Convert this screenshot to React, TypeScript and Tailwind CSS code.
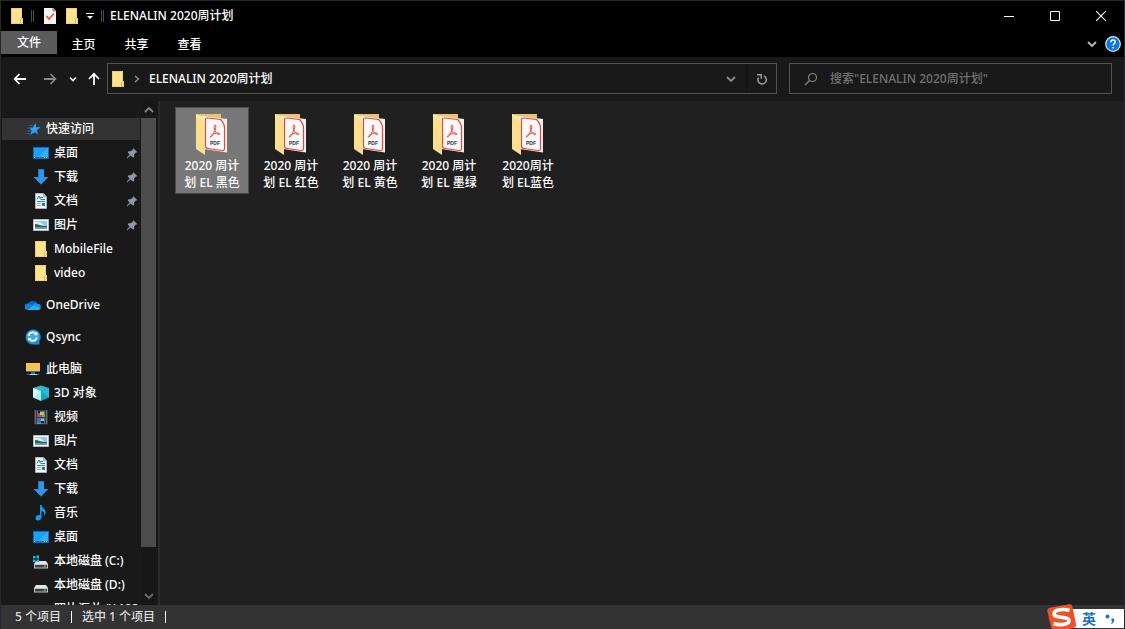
import React, { useState } from 'react';
import clsx from 'clsx';

type IconName =
  | 'desktop'
  | 'download'
  | 'document'
  | 'picture'
  | 'folder'
  | 'cloud'
  | 'sync'
  | 'pc'
  | 'cube'
  | 'video'
  | 'music'
  | 'systemDrive'
  | 'drive'
  | 'star';

interface NavItem {
  id: string;
  label: string;
  icon: IconName;
  pinned?: boolean;
}

interface NavGroup {
  root: NavItem;
  children: NavItem[];
}

const navGroups: NavGroup[] = [
  {
    root: { id: 'quick', label: '快速访问', icon: 'star' },
    children: [
      { id: 'q-desktop', label: '桌面', icon: 'desktop', pinned: true },
      { id: 'q-download', label: '下载', icon: 'download', pinned: true },
      { id: 'q-document', label: '文档', icon: 'document', pinned: true },
      { id: 'q-picture', label: '图片', icon: 'picture', pinned: true },
      { id: 'q-mobile', label: 'MobileFile', icon: 'folder' },
      { id: 'q-video', label: 'video', icon: 'folder' },
    ],
  },
  { root: { id: 'onedrive', label: 'OneDrive', icon: 'cloud' }, children: [] },
  { root: { id: 'qsync', label: 'Qsync', icon: 'sync' }, children: [] },
  {
    root: { id: 'pc', label: '此电脑', icon: 'pc' },
    children: [
      { id: 'p-3d', label: '3D 对象', icon: 'cube' },
      { id: 'p-video', label: '视频', icon: 'video' },
      { id: 'p-picture', label: '图片', icon: 'picture' },
      { id: 'p-document', label: '文档', icon: 'document' },
      { id: 'p-download', label: '下载', icon: 'download' },
      { id: 'p-music', label: '音乐', icon: 'music' },
      { id: 'p-desktop', label: '桌面', icon: 'desktop' },
      { id: 'p-c', label: '本地磁盘 (C:)', icon: 'systemDrive' },
      { id: 'p-d', label: '本地磁盘 (D:)', icon: 'drive' },
      { id: 'p-net', label: '照片汇总 (\\\\192.168', icon: 'drive' },
    ],
  },
];

const files = [
  { id: 'black', lines: ['2020 周计', '划 EL 黑色'] },
  { id: 'red', lines: ['2020 周计', '划 EL 红色'] },
  { id: 'yellow', lines: ['2020 周计', '划 EL 黄色'] },
  { id: 'green', lines: ['2020 周计', '划 EL 墨绿'] },
  { id: 'blue', lines: ['2020周计', '划 EL蓝色'] },
];

function FolderIcon() {
  return (
    <svg viewBox="0 0 16 16" className="h-4 w-4 shrink-0">
      <path d="M2 0h11v10h1v6H2z" fill="#ffe391" />
      <path d="M2.500 .5h10v10h1v5h-11z" fill="none" stroke="#f3d06a" />
      <path d="M11.500 15.500v-4l1-1" fill="none" stroke="#d9a928" strokeWidth=".8" />
    </svg>
  );
}

function Drive({ system }: { system?: boolean }) {
  return (
    <svg viewBox="0 0 16 16" className="h-4 w-4 shrink-0">
      <path d="M3 8h10l2 3H1z" fill="#e3e5e6" />
      <path d="M1 11h14v4.500H1z" fill="#c2c5c7" />
      <path d="M2 12h12v2.500H2z" fill="#3b3d3e" />
      <path d="M11 12.500h1.500v1.500H11z" fill="#45e05a" />
      {system && <path d="M0 3h2.500v2.500H0zM3.500 2.500H6v3H3.500zM0 6.500h2.500V9H0zM3.500 6.500H6V9H3.500z" fill="#18b6f0" />}
    </svg>
  );
}

function NavIcon({ name }: { name: IconName }) {
  const cls = 'h-4 w-4 shrink-0';
  switch (name) {
    case 'folder':
      return <FolderIcon />;
    case 'drive':
      return <Drive />;
    case 'systemDrive':
      return <Drive system />;
    case 'star':
      return (
        <svg viewBox="0 0 16 16" className={cls}>
          <path d="M10.500 2l.7 4.200 4.300.1-3.700 2.900 1.200 4.300-3.500-2.200L5.300 14l1.300-4.500L4 6.800l4-.4z" fill="#2aa5f5" />
          <path d="M4 4.500h4M2 7h4M2.500 10h4M1.500 12.500h3" stroke="#1565a8" />
        </svg>
      );
    case 'desktop':
      return (
        <svg viewBox="0 0 16 16" className={cls}>
          <path d="M0 2h16v12H0z" fill="#0a6fc9" />
          <path d="M1 3h14v9H1z" fill="#1ba0fa" />
          <path d="M15 3v9H5z" fill="#35affc" />
          <path d="M1 12.500h1M11 12.500h1M13 12.500h1" stroke="#fff" />
        </svg>
      );
    case 'download':
      return (
        <svg viewBox="0 0 16 16" className={cls}>
          <path d="M5 0h6v8h4.500L8 15.500.5 8H5z" fill="#3293e8" />
          <path d="M5.500 .5h5M5.500 .5v8" stroke="#2277c5" fill="none" />
        </svg>
      );
    case 'document':
      return (
        <svg viewBox="0 0 16 16" className={cls}>
          <path d="M2.500 .5h8L13.500 4v11.500h-11z" fill="#f6f7f8" stroke="#aeb3b6" />
          <path d="M10.500 .5V4h3" fill="#c9ced1" stroke="#9ca2a6" />
          <path d="M4 6.500L6 3l1.500 3.500M7 4.500h3M8 6.500h4M4 8.500h8" stroke="#1687d3" fill="none" />
          <path d="M4 10.500h4M4 12.500h4" stroke="#9caab3" />
          <path d="M9 10h3v3H9z" fill="#1779b8" />
        </svg>
      );
    case 'picture':
      return (
        <svg viewBox="0 0 16 16" className={cls}>
          <path d="M.5 2.500h15v11H.5z" fill="#fff" stroke="#b9bdc0" />
          <path d="M2 4h12v8H2z" fill="#8ec7f0" />
          <path d="M2 5h5l4 3H2z" fill="#d9edf8" />
          <path d="M2 7c3 0 5 1 7 2h5v1.500H2z" fill="#2d6555" />
          <path d="M2 10h12v2H2z" fill="#6f9bae" />
        </svg>
      );
    case 'cloud':
      return (
        <svg viewBox="0 0 16 16" className={cls}>
          <path d="M3.200 7A5 5 0 0 1 12.300 6.500L13 9 3 11z" fill="#0a64b8" />
          <path d="M3 6.500c2 0 3 .7 4.500 2L2 13A3.300 3.300 0 0 1 3 6.500z" fill="#1180d8" />
          <path d="M7 8.500c1.500-2 4-2.800 5.500-1.800 2.200.2 3.500 1.500 3.500 3.500L11 12z" fill="#1792e4" />
          <path d="M2 13l6-4.500 7.800 2.500c0 1.200-1.200 2-2.800 2z" fill="#2bb0f3" />
        </svg>
      );
    case 'sync':
      return (
        <svg viewBox="0 0 16 16" className={cls}>
          <path d="M8 .5A7.500 7.500 0 1 0 8 15.500h6.500V12A7.500 7.500 0 0 0 8 .5z" fill="#1f8ed6" />
          <circle cx="7.800" cy="7.500" r="6" fill="#3fa9e6" />
          <path d="M3.800 7A4 4 0 0 1 11 5M11.800 8.500A4 4 0 0 1 4.500 10" fill="none" stroke="#fff" strokeWidth="1.600" />
          <path d="M9 6.200h3.500V3zM6.500 9H3v3z" fill="#fff" />
        </svg>
      );
    case 'pc':
      return (
        <svg viewBox="0 0 16 16" className={cls}>
          <path d="M1 2h14v9H1z" fill="#2c6fa8" />
          <path d="M1 2h14v8H1z" fill="#ffc04f" />
          <path d="M6 11h4v2H6z" fill="#2c6fa8" />
          <path d="M5 13.500h7" stroke="#c9d8e4" />
          <path d="M2 13.500h3M12 13.500h2" stroke="#38749f" />
        </svg>
      );
    case 'cube':
      return (
        <svg viewBox="0 0 16 16" className={cls}>
          <path d="M0 3l8-2.500L16 3 8 6z" fill="#35b9cf" />
          <path d="M0 3l8 3v10l-8-3.500z" fill="#a8f0f2" />
          <path d="M16 3L8 6v10l8-3.500z" fill="#12a5c8" />
          <path d="M0 3l8 3-8 6.500z" fill="#d3fafa" />
          <path d="M16 3L8 6l8 6.500z" fill="#28bbd7" />
        </svg>
      );
    case 'video':
      return (
        <svg viewBox="0 0 16 16" className={cls}>
          <path d="M1 1h14v14.500H1z" fill="#3c3c3c" />
          <path d="M2.500 1.500v14M13.500 1.500v14" stroke="#999" strokeDasharray="1 1" />
          <path d="M4 2h8v6H4zM4 9h8v6H4z" fill="#3f6fd4" />
          <path d="M4 5h3v3H4z" fill="#c4453f" />
          <path d="M7 3h4v3H7zM8 10h3v2H8z" fill="#e2bd35" />
          <path d="M9 6h3v2H9zM4 14h4v1H4z" fill="#63b04c" />
          <path d="M5 2h2v2H5zM8 12h3v2H8z" fill="#141c3c" />
        </svg>
      );
    case 'music':
      return (
        <svg viewBox="0 0 16 16" className={cls}>
          <path d="M7 0h1.500c.3 3 4.500 4 4.200 7.500-.1 1.300-.7 2.300-1.700 3 .8-2.500-.3-4-2.500-4.800V12c0 2-1.500 3.500-3.500 3.500S2.500 14.200 2.500 13c0-2 2.500-3.400 4.500-2.700z" fill="#109cf5" />
        </svg>
      );
  }
}

function PinIcon() {
  return (
    <svg viewBox="0 0 12 12" className="h-3 w-3 shrink-0">
      <path d="M7 1l4.500 4.200-1.700.4-1.700 2 .1 2.400-1.400.6L4.800 8.600 1 11.500.7 11l3-3.600-2-2 .8-1.200 2.600-.1 1.800-1.600z" fill="#8e9aa3" />
    </svg>
  );
}

function Chevron({ className }: { className?: string }) {
  return (
    <svg viewBox="0 0 10 10" className={clsx('h-2.5 w-2.5 shrink-0', className)}>
      <path d="M1 3l4 4 4-4" fill="none" stroke="currentColor" strokeWidth="1.800" />
    </svg>
  );
}

function PdfFolder() {
  return (
    <svg viewBox="0 0 32 42" className="h-[42px] w-8" role="img" aria-label="PDF">
      <path d="M0 1h25v32H0z" fill="#e8c568" />
      <path d="M3 2l6 2v34l-7-4z" fill="#f4e4b4" />
      <path d="M7 3l24 3v33.500L8 36z" fill="#f1f1f1" />
      <path d="M12 5l12.500 1.500c2.500 2.500 4 5 4 8.500v20.500c0 1.500-1 2.200-2.500 2L12 35.500c-2-.2-2.500-1-2.500-2.500V7c0-1.500.6-2.100 2.500-2z" fill="#fafafa" stroke="#ef4339" strokeWidth="1.200" />
      <path d="M19 12c1.800 0 .6 3.500-.7 6.500-1.200 2.800-2.500 5.500-3.700 5.500-1.600 0 1-2.700 4.200-3.600 2.900-.8 5.300-.4 5 .9-.5 1.400-3.200-.7-4.500-3-1.200-2.300-1.700-6.300-.3-6.300z" fill="none" stroke="#ef4339" />
      <text x="14" y="32" fontFamily="Liberation Sans Narrow, Liberation Sans, sans-serif" fontSize="5" fontWeight="700" fill="#333">PDF</text>
      <path d="M0 1l9 6v35l-9-6z" fill="#fbdf8f" />
      <path d="M0 1l9 6v2L0 3z" fill="#ffe9ae" />
    </svg>
  );
}

function TitleBar() {
  return (
    <header className="flex h-[30px] items-center bg-black pl-2">
      <FolderIcon />
      <span className="ml-1.5 h-3 w-[3px] border-x border-[#4a4a4a]" />
      <button aria-label="属性" className="ml-2">
        <svg viewBox="0 0 16 16" className="h-4 w-4">
          <path d="M2 0h9l3 3v13H2z" fill="#f4f4f4" />
          <path d="M11 0v3h3" fill="#a8a8a8" stroke="#808080" />
          <path d="M4.500 8l2.500 3 5-5.500" fill="none" stroke="#e8532a" strokeWidth="1.600" />
        </svg>
      </button>
      <button aria-label="新建文件夹" className="ml-1.5">
        <FolderIcon />
      </button>
      <button aria-label="自定义快速访问工具栏" className="ml-1.5">
        <svg viewBox="0 0 8 8" className="h-2 w-2">
          <path d="M0 1.500h8" stroke="#fff" />
          <path d="M1 4h6L4 7z" fill="#fff" />
        </svg>
      </button>
      <span className="ml-[7px] h-3 w-[3px] border-x border-[#4a4a4a]" />
      <h1 className="ml-1.5 flex-1">ELENALIN 2020周计划</h1>
      <div className="flex">
        <button aria-label="最小化" className="flex h-7 w-[46px] items-center justify-center">
          <svg viewBox="0 0 10 10" className="h-2.5 w-2.5">
            <path d="M0 5.500h10" stroke="#fff" />
          </svg>
        </button>
        <button aria-label="最大化" className="flex h-7 w-[46px] items-center justify-center">
          <svg viewBox="0 0 10 10" className="h-2.5 w-2.5">
            <path d="M.5.5h9v9h-9z" fill="none" stroke="#fff" />
          </svg>
        </button>
        <button aria-label="关闭" className="flex h-7 w-[46px] items-center justify-center">
          <svg viewBox="0 0 10 10" className="h-2.5 w-2.5">
            <path d="M0 0l10 10M10 0L0 10" stroke="#fff" strokeWidth="1.100" />
          </svg>
        </button>
      </div>
    </header>
  );
}

function Ribbon() {
  return (
    <div className="flex h-[26px] items-start bg-black pr-[3px]">
      <button className="h-[23px] w-14 bg-[#5c5c5c] pt-px">文件</button>
      <div className="flex flex-1">
        {['主页', '共享', '查看'].map((tab) => (
          <button key={tab} className="h-[26px] w-[53px] pt-px">
            {tab}
          </button>
        ))}
      </div>
      <div className="flex h-[26px] items-center gap-2">
        <button aria-label="展开功能区">
          <Chevron className="text-[#bdbdbd]" />
        </button>
        <button aria-label="帮助">
          <svg viewBox="0 0 16 16" className="h-4 w-4">
            <circle cx="8" cy="8" r="7.300" fill="#0a78d6" stroke="#dce9f5" strokeWidth="1.200" />
            <path d="M5.800 6.200c0-3 4.400-3 4.400-.2 0 1.600-2.100 1.600-2.100 3.500M8.100 11v1.600" fill="none" stroke="#fff" strokeWidth="1.500" />
          </svg>
        </button>
      </div>
    </div>
  );
}

function AddressBar() {
  return (
    <div className="flex h-11 items-center bg-[#191919] px-3 pb-px">
      <nav className="flex w-[94px] items-center" aria-label="导航">
        <button aria-label="后退">
          <svg viewBox="0 0 14 14" className="h-3.5 w-3.5">
            <path d="M13 7H2M6.500 2L1.700 7l4.800 5" fill="none" stroke="#fff" strokeWidth="1.800" />
          </svg>
        </button>
        <button aria-label="前进" className="ml-4">
          <svg viewBox="0 0 14 14" className="h-3.5 w-3.5">
            <path d="M1 7h11M7.500 2l4.800 5-4.800 5" fill="none" stroke="#888" strokeWidth="1.800" />
          </svg>
        </button>
        <button aria-label="最近浏览的位置" className="ml-3">
          <svg viewBox="0 0 8 8" className="h-2 w-2">
            <path d="M1 2.500l3 3 3-3" fill="none" stroke="#eee" strokeWidth="1.600" />
          </svg>
        </button>
        <button aria-label="上移" className="ml-2.5">
          <svg viewBox="0 0 14 14" className="h-3.5 w-3.5">
            <path d="M7 13V2M2 7l5-5.200L12 7" fill="none" stroke="#fff" strokeWidth="1.800" />
          </svg>
        </button>
      </nav>
      <div className="flex h-[31px] flex-1 items-center border border-[#535353] pl-0.5">
        <FolderIcon />
        <svg viewBox="0 0 6 8" className="ml-2 h-2 w-1.5">
          <path d="M1 1l3.500 3L1 7" fill="none" stroke="#909090" strokeWidth="1.400" />
        </svg>
        <button className="ml-[9px]">ELENALIN 2020周计划</button>
        <button aria-label="以前的位置" className="mr-2.5 ml-auto">
          <Chevron className="text-[#8c8c8c]" />
        </button>
        <button aria-label="刷新" className="flex h-full w-[30px] items-center justify-center border-l border-[#141414]">
          <svg viewBox="0 0 12 12" className="h-3 w-3">
            <path d="M2.600 4.500A4.200 4.200 0 1 0 8 3" fill="none" stroke="#9a9a9a" strokeWidth="1.500" />
            <path d="M1 1.700h4.300v4" fill="none" stroke="#9a9a9a" strokeWidth="1.500" />
          </svg>
        </button>
      </div>
      <label className="ml-3 flex h-[31px] w-[323px] items-center border border-[#535353] pl-3.5">
        <svg viewBox="0 0 14 14" className="h-3.5 w-3.5 shrink-0">
          <circle cx="8.500" cy="5.500" r="4" fill="none" stroke="#858585" strokeWidth="1.200" />
          <path d="M5.500 8.500L1 13" stroke="#858585" strokeWidth="1.300" />
        </svg>
        <input
          type="search"
          aria-label="搜索"
          placeholder={'搜索"ELENALIN 2020周计划"'}
          className="ml-3 min-w-0 flex-1 bg-transparent outline-none placeholder:text-[#727272]"
        />
      </label>
    </div>
  );
}

interface NavRowProps {
  item: NavItem;
  nested?: boolean;
  active?: boolean;
  onSelect: (id: string) => void;
}

function NavRow({ item, nested, active, onSelect }: NavRowProps) {
  return (
    <li className="py-px">
      <button
        onClick={() => onSelect(item.id)}
        className={clsx(
          'ml-px flex h-[22px] w-[138px] items-center gap-[5px] pr-0.5 text-left whitespace-nowrap',
          nested ? 'pl-[31px]' : 'pl-[23px]',
          active && 'bg-[#333]'
        )}
      >
        <NavIcon name={item.icon} />
        <span className="flex-1 overflow-hidden">{item.label}</span>
        {item.pinned && <PinIcon />}
      </button>
    </li>
  );
}

function Sidebar() {
  const [active, setActive] = useState('quick');

  return (
    <aside className="flex w-[159px] shrink-0 border-r-2 border-[#2b2b2b] bg-[#191919]">
      <nav className="w-[140px] overflow-hidden pt-4" aria-label="文件夹">
        <ul className="flex flex-col gap-2">
          {navGroups.map((group) => (
            <li key={group.root.id}>
              <ul>
                <NavRow item={group.root} active={active === group.root.id} onSelect={setActive} />
                {group.children.map((child) => (
                  <NavRow key={child.id} item={child} nested active={active === child.id} onSelect={setActive} />
                ))}
              </ul>
            </li>
          ))}
        </ul>
      </nav>
      <div className="flex w-[15px] flex-col items-center bg-[#171717]">
        <button aria-label="向上滚动" className="flex h-[17px] items-center">
          <Chevron className="rotate-180 text-[#868686]" />
        </button>
        <div className="w-full flex-1 bg-[#4d4d4d]" />
        <div className="h-10" />
        <button aria-label="向下滚动" className="flex h-[18px] items-center">
          <Chevron className="text-[#686868]" />
        </button>
      </div>
    </aside>
  );
}

function FileGrid() {
  const [selected, setSelected] = useState('black');

  return (
    <main className="flex flex-1 flex-wrap content-start gap-[5px] bg-[#202020] pt-1.5 pl-[15px]">
      {files.map((file) => (
        <button
          key={file.id}
          onClick={() => setSelected(file.id)}
          className={clsx(
            'flex h-[87px] w-[74px] flex-col items-center border pt-[5px] leading-[17px]',
            selected === file.id ? 'border-[#4a4a4a] bg-[#777]' : 'border-transparent'
          )}
        >
          <PdfFolder />
          <span className="mt-0.5 whitespace-nowrap">
            {file.lines[0]}
            <br />
            {file.lines[1]}
          </span>
        </button>
      ))}
    </main>
  );
}

function InputMethodBar() {
  return (
    <div className="absolute right-0 bottom-0 flex items-end">
      <svg viewBox="0 0 30 25" className="z-10 -mr-[5px] h-[25px] w-[30px]">
        <path d="M4 3.500L22 .3c2-.3 3 .4 3.400 2.200L29 20c.4 2-.3 3.300-2 3.800L22 25H6.500C4.800 25 4.200 24 3.800 22L.4 7.500C0 5 1.500 4 4 3.500z" fill="#ef5226" />
        <path d="M22.500 6.500C17 4.500 7 5.500 7 10c0 4.500 15 2 15 6.500 0 4.500-10 5-15.500 3" fill="none" stroke="#fff" strokeWidth="3.600" />
      </svg>
      <div className="mb-px flex h-[19px] w-[52px] items-center gap-2 bg-white pl-2.5 text-[#1a73c4]">
        <span className="text-sm leading-4 font-bold">英</span>
        <svg viewBox="0 0 12 12" className="h-3 w-3">
          <circle cx="3.500" cy="3.500" r="2" fill="#1a73c4" />
          <path d="M7.500 5.500H10c.8 2-.2 4.500-2.500 5.500l-.5-.8c1-.7 1.200-1.200 1.100-2.200h-.6z" fill="#1a73c4" />
        </svg>
      </div>
    </div>
  );
}

export default function App() {
  return (
    <div className="relative flex h-screen flex-col overflow-hidden border-x border-t border-[#25282d] bg-black font-['Noto_Sans','Noto_Sans_CJK_SC',sans-serif] text-[12px] leading-4 font-medium text-white">
      <TitleBar />
      <Ribbon />
      <AddressBar />
      <div className="flex min-h-0 flex-1">
        <Sidebar />
        <FileGrid />
      </div>
      <footer className="flex h-6 shrink-0 items-center bg-[#333] pl-3.5 text-[#dedede]">
        <span>5 个项目</span>
        <span className="ml-2.5 h-3 w-px bg-white" />
        <span className="ml-2.5">选中 1 个项目</span>
        <span className="ml-2.5 h-3 w-px bg-white" />
      </footer>
      <InputMethodBar />
    </div>
  );
}
